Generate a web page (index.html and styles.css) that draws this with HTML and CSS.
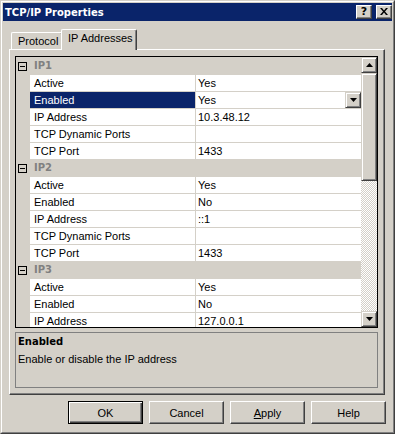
FILE: index.html
```html
<!DOCTYPE html>
<html>
<head>
<meta charset="utf-8">
<title>TCP/IP Properties</title>
<link rel="stylesheet" href="styles.css">
</head>
<body>
<div class="window">
  <div class="frame">
    <div class="titlebar">
      <span class="title">TCP/IP Properties</span>
      <div class="caption-btns">
        <div class="cap-btn help">?</div>
        <div class="cap-btn close">
          <svg width="8" height="7" viewBox="0 0 8 7"><path d="M0 0h2l2 2.5L6 0h2L5 3.5 8 7H6L4 4.5 2 7H0l3-3.5z" fill="#000"/></svg>
        </div>
      </div>
    </div>
    <div class="content">
      <div class="tabs">
        <div class="tab">Protocol</div>
        <div class="tab active">IP Addresses</div>
      </div>
      <div class="panel">
        <div class="grid">
          <div class="rows">
            <div class="cat"><span class="gutter"><svg width="9" height="9" viewBox="0 0 9 9"><rect x="0.5" y="0.5" width="8" height="8" fill="none" stroke="#000"/><path d="M2 4.5h5" stroke="#000"/></svg></span><span class="cat-name">IP1</span></div>
            <div class="row"><span class="gutter"></span><span class="name">Active</span><span class="value">Yes</span></div>
            <div class="row"><span class="gutter"></span><span class="name selected">Enabled</span><span class="value">Yes<span class="drop"><svg width="7" height="4" viewBox="0 0 7 4"><path d="M0 0h7L3.5 4z" fill="#000"/></svg></span></span></div>
            <div class="row"><span class="gutter"></span><span class="name">IP Address</span><span class="value">10.3.48.12</span></div>
            <div class="row"><span class="gutter"></span><span class="name">TCP Dynamic Ports</span><span class="value"></span></div>
            <div class="row"><span class="gutter"></span><span class="name">TCP Port</span><span class="value">1433</span></div>
            <div class="cat"><span class="gutter"><svg width="9" height="9" viewBox="0 0 9 9"><rect x="0.5" y="0.5" width="8" height="8" fill="none" stroke="#000"/><path d="M2 4.5h5" stroke="#000"/></svg></span><span class="cat-name">IP2</span></div>
            <div class="row"><span class="gutter"></span><span class="name">Active</span><span class="value">Yes</span></div>
            <div class="row"><span class="gutter"></span><span class="name">Enabled</span><span class="value">No</span></div>
            <div class="row"><span class="gutter"></span><span class="name">IP Address</span><span class="value">::1</span></div>
            <div class="row"><span class="gutter"></span><span class="name">TCP Dynamic Ports</span><span class="value"></span></div>
            <div class="row"><span class="gutter"></span><span class="name">TCP Port</span><span class="value">1433</span></div>
            <div class="cat"><span class="gutter"><svg width="9" height="9" viewBox="0 0 9 9"><rect x="0.5" y="0.5" width="8" height="8" fill="none" stroke="#000"/><path d="M2 4.5h5" stroke="#000"/></svg></span><span class="cat-name">IP3</span></div>
            <div class="row"><span class="gutter"></span><span class="name">Active</span><span class="value">Yes</span></div>
            <div class="row"><span class="gutter"></span><span class="name">Enabled</span><span class="value">No</span></div>
            <div class="row"><span class="gutter"></span><span class="name">IP Address</span><span class="value">127.0.0.1</span></div>
          </div>
          <div class="scrollbar">
            <div class="sb-btn"><svg width="7" height="4" viewBox="0 0 7 4"><path d="M3.5 0L7 4H0z" fill="#000"/></svg></div>
            <div class="sb-thumb"></div>
            <div class="sb-track"></div>
            <div class="sb-btn"><svg width="7" height="4" viewBox="0 0 7 4"><path d="M0 0h7L3.5 4z" fill="#000"/></svg></div>
          </div>
        </div>
        <div class="desc">
          <div class="desc-title">Enabled</div>
          <div class="desc-text">Enable or disable the IP address</div>
        </div>
      </div>
      <div class="buttons">
        <div class="btn default">OK</div>
        <div class="btn">Cancel</div>
        <div class="btn"><u>A</u>pply</div>
        <div class="btn">Help</div>
      </div>
    </div>
  </div>
</div>
</body>
</html>
```
FILE: styles.css
```css
html, body {
  margin: 0;
  padding: 0;
}
body {
  background: #d4d0c8;
  font-family: "Liberation Sans", Arial, sans-serif;
  font-size: 11px;
  color: #000;
}
.window {
  width: 395px;
  height: 434px;
  box-sizing: border-box;
  border: 1px solid;
  border-color: #d4d0c8 #404040 #404040 #d4d0c8;
}
.frame {
  height: 100%;
  box-sizing: border-box;
  border: 1px solid;
  border-color: #fff #808080 #808080 #fff;
  padding: 1px;
  display: flex;
  flex-direction: column;
}
.titlebar {
  height: 18px;
  background: #0a246a;
  color: #fff;
  display: flex;
  align-items: center;
  padding-left: 2px;
}
.title {
  font-family: "DejaVu Sans", sans-serif;
  font-weight: bold;
  font-size: 10px;
  flex: 1;
}
.caption-btns {
  display: flex;
  gap: 4px;
}
.cap-btn {
  width: 16px;
  height: 14px;
  box-sizing: border-box;
  background: #d4d0c8;
  border: 1px solid;
  border-color: #fff #404040 #404040 #fff;
  box-shadow: inset -1px -1px #808080;
  color: #000;
  display: flex;
  align-items: center;
  justify-content: center;
}
.help {
  font-family: "DejaVu Sans", sans-serif;
  font-weight: bold;
  font-size: 11px;
  line-height: 12px;
  padding-bottom: 1px;
}
.close svg {
  margin-bottom: 1px;
}
.content {
  flex: 1;
  padding: 8px 7px 0 6px;
  display: flex;
  flex-direction: column;
}
.tabs {
  height: 20px;
  display: flex;
  align-items: flex-end;
  padding-left: 2px;
  position: relative;
  z-index: 1;
}
.tab {
  width: 52px;
  height: 17px;
  box-sizing: border-box;
  background: #d4d0c8;
  border-top: 1px solid #fff;
  border-left: 1px solid #fff;
  border-right: 1px solid #404040;
  box-shadow: inset -1px 0 #808080;
  border-radius: 2px 2px 0 0;
  padding-left: 6px;
  line-height: 16px;
  white-space: nowrap;
}
.tab.active {
  position: relative;
  width: 76px;
  height: 21px;
  margin-left: -2px;
  margin-bottom: -1px;
  line-height: 17px;
}
.panel {
  height: 346px;
  box-sizing: border-box;
  border: 1px solid;
  border-color: #fff #404040 #404040 #fff;
  box-shadow: inset -1px -1px #808080;
  padding: 6px 6px 6px 5px;
  display: flex;
  flex-direction: column;
  gap: 4px;
}
.grid {
  height: 272px;
  box-sizing: border-box;
  border: 1px solid #000;
  display: flex;
  background: #d4d0c8;
}
.rows {
  width: 345px;
  height: 270px;
  overflow: hidden;
}
.row, .cat {
  height: 17px;
  display: flex;
}
.gutter {
  width: 14px;
  flex: none;
  display: flex;
  align-items: center;
  justify-content: flex-end;
  padding-right: 3px;
  box-sizing: border-box;
}
.cat .gutter {
  padding-top: 1px;
}
.cat-name {
  font-family: "DejaVu Sans", sans-serif;
  font-size: 10px;
  font-weight: bold;
  color: #808080;
  padding-left: 4px;
  line-height: 17px;
}
.name, .value {
  box-sizing: border-box;
  border-top: 1px solid #d4d0c8;
  background: #fff;
  line-height: 16px;
  white-space: nowrap;
  overflow: hidden;
}
.name {
  width: 165px;
  padding-left: 4px;
}
.name.selected {
  background: #0a246a;
  color: #fff;
}
.value {
  width: 166px;
  border-left: 1px solid #d4d0c8;
  padding-left: 2px;
  display: flex;
}
.drop {
  margin-left: auto;
  width: 16px;
  height: 16px;
  box-sizing: border-box;
  background: #d4d0c8;
  border: 1px solid;
  border-color: #d4d0c8 #404040 #404040 #d4d0c8;
  box-shadow: inset 1px 1px #fff, inset -1px -1px #808080;
  display: flex;
  align-items: center;
  justify-content: center;
}
.scrollbar {
  width: 16px;
  display: flex;
  flex-direction: column;
}
.sb-btn, .sb-thumb {
  box-sizing: border-box;
  background: #d4d0c8;
  border: 1px solid;
  border-color: #d4d0c8 #404040 #404040 #d4d0c8;
  box-shadow: inset 1px 1px #fff, inset -1px -1px #808080;
}
.sb-btn {
  height: 16px;
  display: flex;
  align-items: center;
  justify-content: center;
}
.sb-thumb {
  height: 108px;
}
.sb-track {
  flex: 1;
  background-color: #fff;
  background-image: conic-gradient(#d4d0c8 25%, #fff 0 50%, #d4d0c8 0 75%, #fff 0);
  background-size: 2px 2px;
}
.desc {
  height: 56px;
  box-sizing: border-box;
  border: 1px solid #808080;
  padding: 2px 2px 0 2px;
}
.desc-title {
  font-family: "DejaVu Sans", sans-serif;
  font-size: 10px;
  font-weight: bold;
  line-height: 14px;
}
.desc-text {
  line-height: 14px;
  margin-top: 3px;
}
.buttons {
  display: flex;
  justify-content: flex-end;
  gap: 6px;
  margin-top: 6px;
  margin-right: -1px;
}
.btn {
  width: 75px;
  height: 23px;
  box-sizing: border-box;
  background: #d4d0c8;
  border: 1px solid;
  border-color: #fff #404040 #404040 #fff;
  box-shadow: inset -1px -1px #808080;
  display: flex;
  align-items: center;
  justify-content: center;
}
.btn.default {
  border-color: #000;
  box-shadow: inset 1px 1px #fff, inset -1px -1px #404040, inset -2px -2px #808080;
}
```
